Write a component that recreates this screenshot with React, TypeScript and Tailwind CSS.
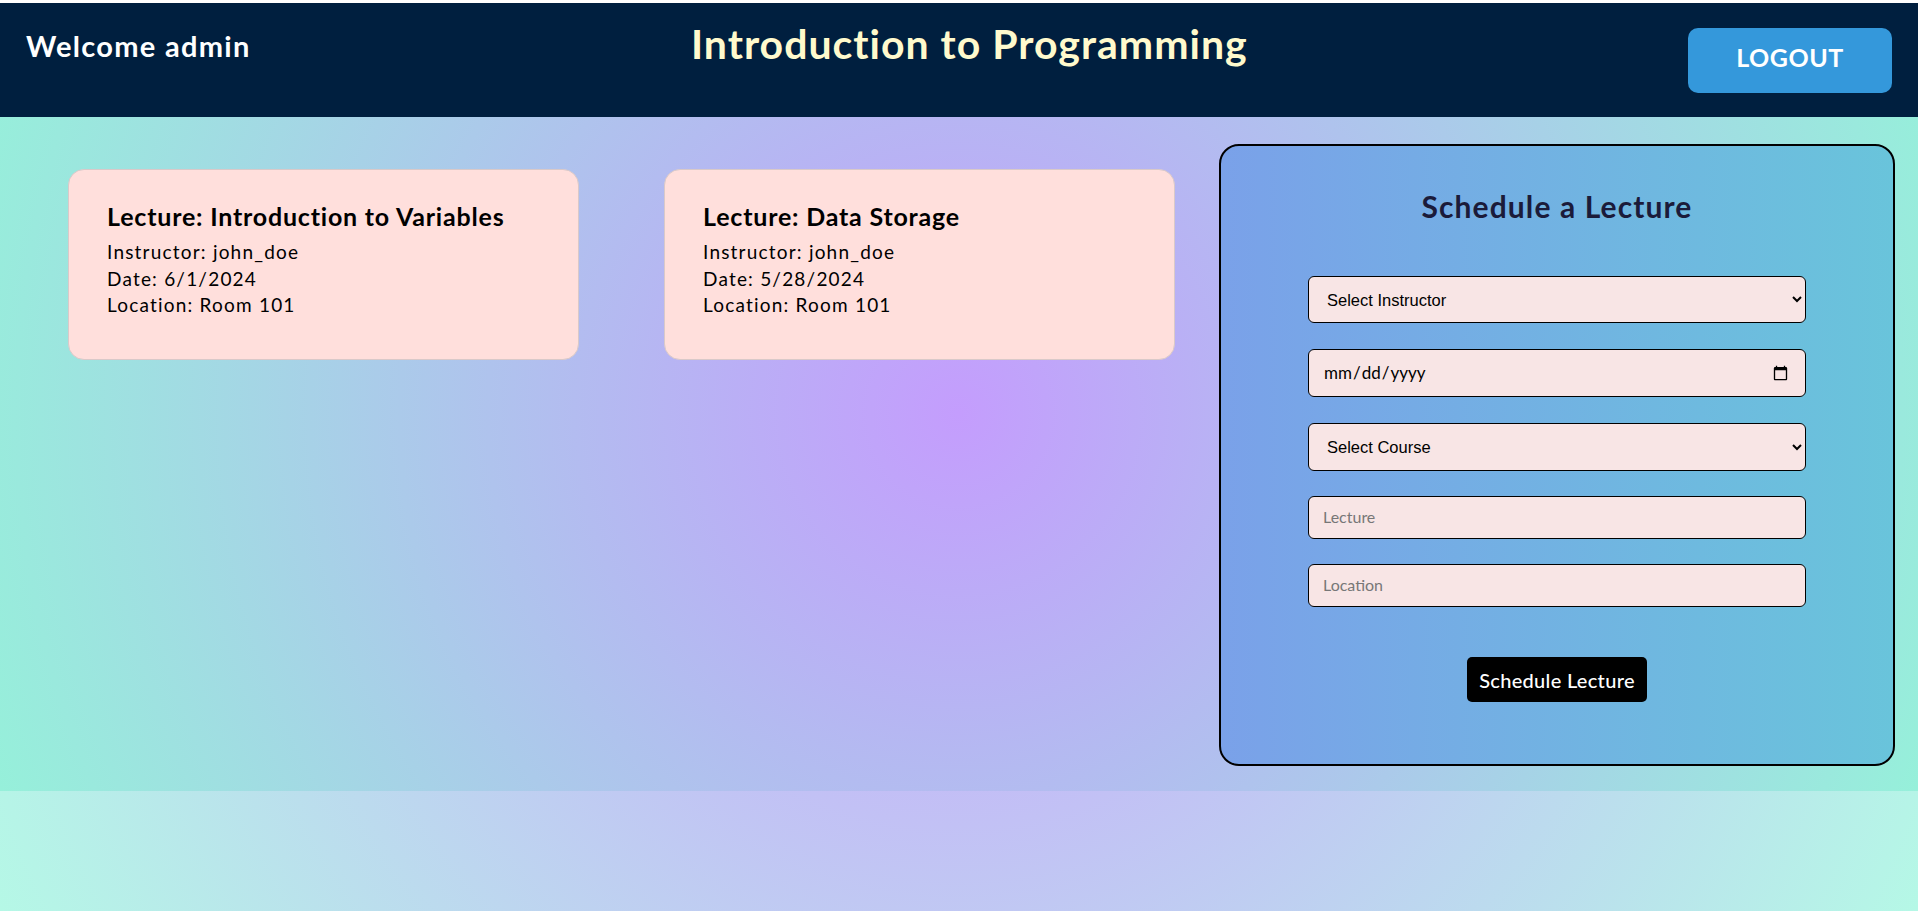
import React from "react";

function LectureCard({ title, instructor, date, location }: { title: string; instructor: string; date: string; location: string }) {
  return (
    <div className="w-[511px] h-[191px] shrink-0 rounded-[16px] bg-[#ffdfdc] border border-[#d9c9c9] pt-[34px] pl-[38px]">
      <h3 className="text-[25px] leading-none font-bold tracking-[0.8px] text-black">{title}</h3>
      <div className="mt-[10px] text-[19px] leading-[26.5px] tracking-[1.2px] text-black">
        <p>Instructor: {instructor}</p>
        <p>Date: {date}</p>
        <p>Location: {location}</p>
      </div>
    </div>
  );
}

export default function App() {
  return (
    <div className="min-h-screen flex flex-col bg-white" style={{ fontFamily: "Lato, 'Noto Sans', sans-serif" }}>
      <div className="h-[3px] bg-white shrink-0" />
      <header className="h-[114px] shrink-0 bg-[#001f3f] flex justify-between items-start px-[26px]">
        <h2 className="mt-[28px] text-[29px] leading-none font-bold tracking-[1.3px] text-white">Welcome admin</h2>
        <h1 className="mt-[20px] text-[41px] leading-none font-bold tracking-[1px] text-[#fffacd]">Introduction to Programming</h1>
        <button className="mt-[25px] w-[204px] h-[65px] rounded-[10px] bg-[#3498db] text-white text-[25px] font-bold tracking-[0.5px] pb-[5px]">LOGOUT</button>
      </header>
      <main className="h-[674px] shrink-0 flex items-start pl-[68px] pr-[23px] bg-[radial-gradient(circle_at_50%_44%,#c49dfd_0%,#96f0da_100%)]">
        <div className="flex gap-[85px] mt-[52px]">
          <LectureCard title="Lecture: Introduction to Variables" instructor="john_doe" date="6/1/2024" location="Room 101" />
          <LectureCard title="Lecture: Data Storage" instructor="john_doe" date="5/28/2024" location="Room 101" />
        </div>
        <section className="ml-auto mt-[27px] w-[676px] h-[622px] rounded-[20px] border-2 border-black bg-[linear-gradient(to_right,#7aa1e9,#69c4db)] flex flex-col items-center pt-[45px]">
          <h2 className="text-[30px] leading-none font-bold tracking-[1.1px] text-[#1b1b3a]">Schedule a Lecture</h2>
          <select
            className="mt-[55px] w-[498px] h-[47px] rounded-[6px] border border-black bg-[#f8e5e5] px-[14px] text-[16.5px] text-black"
            style={{ fontFamily: "'Liberation Sans', Arial, sans-serif" }}
            defaultValue=""
          >
            <option value="">Select Instructor</option>
          </select>
          <input
            type="date"
            className="mt-[26px] w-[498px] h-[48px] rounded-[6px] border border-black bg-[#f8e5e5] px-[14px] text-[17px] text-black"
          />
          <select
            className="mt-[26px] w-[498px] h-[48px] rounded-[6px] border border-black bg-[#f8e5e5] px-[14px] text-[16.5px] text-black"
            style={{ fontFamily: "'Liberation Sans', Arial, sans-serif" }}
            defaultValue=""
          >
            <option value="">Select Course</option>
          </select>
          <input
            type="text"
            placeholder="Lecture"
            className="mt-[25px] w-[498px] h-[43px] rounded-[6px] border border-black bg-[#f8e5e5] px-[14px] pb-[3px] text-[16px] text-black placeholder:text-[#777777]"
          />
          <input
            type="text"
            placeholder="Location"
            className="mt-[25px] w-[498px] h-[43px] rounded-[6px] border border-black bg-[#f8e5e5] px-[14px] pb-[3px] text-[16px] text-black placeholder:text-[#777777]"
          />
          <button className="mt-[50px] w-[180px] h-[45px] rounded-[5px] bg-black text-white text-[20px] font-medium tracking-[0.3px]">Schedule Lecture</button>
        </section>
      </main>
      <div className="flex-1 bg-[radial-gradient(circle_at_50%_-336px,#cdb2fa_0%,#c3bdf6_30%,#b5f8e6_100%)]" />
    </div>
  );
}
